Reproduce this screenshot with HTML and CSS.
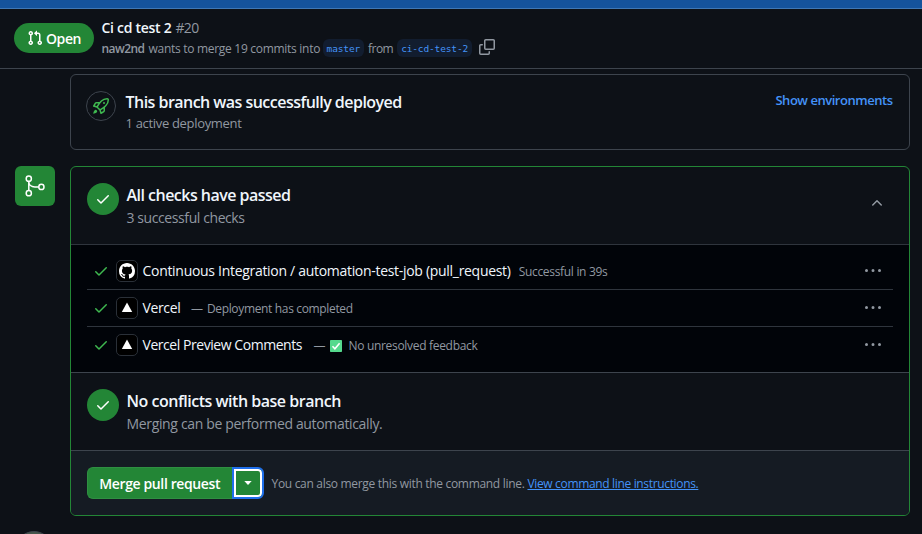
FILE: index.html
```
<!DOCTYPE html>
<html lang="en">
<head>
<meta charset="utf-8">
<title>Ci cd test 2 #20</title>
<link rel="stylesheet" href="styles.css">
</head>
<body>
<svg class="defs" aria-hidden="true">
  <symbol id="check" viewBox="0 0 16 16"><path d="M13.78 4.22a.75.75 0 0 1 0 1.06l-7.25 7.25a.75.75 0 0 1-1.06 0L2.22 9.28a.751.751 0 0 1 .018-1.042.751.751 0 0 1 1.042-.018L6 10.94l6.72-6.72a.75.75 0 0 1 1.06 0Z"/></symbol>
  <symbol id="kebab" viewBox="0 0 16 16"><path d="M8 9a1.5 1.5 0 1 0 0-3 1.5 1.5 0 0 0 0 3ZM1.5 9a1.5 1.5 0 1 0 0-3 1.5 1.5 0 0 0 0 3Zm13 0a1.5 1.5 0 1 0 0-3 1.5 1.5 0 0 0 0 3Z"/></symbol>
  <symbol id="triangle" viewBox="0 0 20 20"><path d="M10 4.6 15.2 14H4.8Z"/></symbol>
</svg>
<div class="topbar"></div>
<header class="header">
  <span class="state">
    <svg width="16" height="16" viewBox="0 0 16 16"><path d="M1.5 3.25a2.25 2.25 0 1 1 3 2.122v5.256a2.251 2.251 0 1 1-1.5 0V5.372A2.25 2.25 0 0 1 1.5 3.25Zm5.677-.177L9.573.677A.25.25 0 0 1 10 .854V2.5h1A2.5 2.5 0 0 1 13.5 5v5.628a2.251 2.251 0 1 1-1.5 0V5a1 1 0 0 0-1-1h-1v1.646a.25.25 0 0 1-.427.177L7.177 3.427a.25.25 0 0 1 0-.354ZM3.75 2.5a.75.75 0 1 0 0 1.5.75.75 0 0 0 0-1.5Zm0 9.5a.75.75 0 1 0 0 1.5.75.75 0 0 0 0-1.5Zm8.25.75a.75.75 0 1 0 1.5 0 .75.75 0 0 0-1.5 0Z"/></svg>
    <span class="state-text">Open</span>
  </span>
  <div class="head-text">
    <div class="head-title"><b>Ci cd test 2</b><span class="number">#20</span></div>
    <div class="head-meta">
      <b>naw2nd</b><span class="wants">wants to merge 19 commits into</span><code class="base">master</code><span class="from">from</span><code>ci-cd-test-2</code>
      <svg class="copy" width="16" height="16" viewBox="0 0 16 16"><path d="M0 6.75C0 5.784.784 5 1.75 5h1.5a.75.75 0 0 1 0 1.5h-1.5a.25.25 0 0 0-.25.25v7.5c0 .138.112.25.25.25h7.5a.25.25 0 0 0 .25-.25v-1.5a.75.75 0 0 1 1.5 0v1.5A1.75 1.75 0 0 1 9.25 16h-7.5A1.75 1.75 0 0 1 0 14.25Z"/><path d="M5 1.75C5 .784 5.784 0 6.75 0h7.5C15.216 0 16 .784 16 1.75v7.5A1.75 1.75 0 0 1 14.25 11h-7.5A1.75 1.75 0 0 1 5 9.25Zm1.75-.25a.25.25 0 0 0-.25.25v7.5c0 .138.112.25.25.25h7.5a.25.25 0 0 0 .25-.25v-7.5a.25.25 0 0 0-.25-.25Z"/></svg>
    </div>
  </div>
</header>
<main class="main">
  <section class="deploy">
    <span class="rocket"><svg width="16" height="16" viewBox="0 0 16 16"><path d="M14.064 0h.186C15.216 0 16 .784 16 1.75v.186a8.752 8.752 0 0 1-2.564 6.186l-.458.459c-.314.314-.641.616-.979.904v3.207c0 .608-.315 1.172-.833 1.49l-2.774 1.707a.749.749 0 0 1-1.11-.418l-.954-3.102a1.214 1.214 0 0 1-.145-.125L3.754 9.816a1.218 1.218 0 0 1-.124-.145L.528 8.717a.749.749 0 0 1-.418-1.11l1.71-2.774A1.748 1.748 0 0 1 3.31 4h3.204c.288-.338.59-.665.904-.979l.459-.458A8.749 8.749 0 0 1 14.064 0ZM8.938 3.623h-.002l-.458.458c-.76.76-1.437 1.598-2.02 2.5l-1.5 2.317 2.143 2.143 2.317-1.5c.902-.583 1.74-1.26 2.499-2.02l.459-.458a7.25 7.25 0 0 0 2.123-5.127V1.75a.25.25 0 0 0-.25-.25h-.186a7.249 7.249 0 0 0-5.125 2.123ZM3.56 14.56c-.732.732-2.334 1.045-3.005 1.148a.234.234 0 0 1-.201-.064.234.234 0 0 1-.064-.201c.103-.671.416-2.273 1.15-3.003a1.502 1.502 0 1 1 2.12 2.12Zm6.94-3.935c-.088.06-.177.118-.266.175l-2.35 1.521.548 1.783 1.949-1.2a.25.25 0 0 0 .119-.213ZM3.678 8.116 5.2 5.766c.058-.09.117-.178.176-.266H3.309a.25.25 0 0 0-.213.119l-1.2 1.95ZM12 5a1 1 0 1 1-2 0 1 1 0 0 1 2 0Z"/></svg></span>
    <div class="grow">
      <h3 class="deploy-title">This branch was successfully deployed</h3>
      <p class="deploy-sub">1 active deployment</p>
    </div>
    <a class="show-env">Show environments</a>
  </section>
  <div class="merge-row">
    <span class="merge-badge"><svg width="24" height="24" viewBox="0 0 24 24"><circle cx="5.8" cy="4.7" r="2.6"/><circle cx="5.8" cy="19.2" r="2.6"/><circle cx="18.4" cy="12.9" r="2.6"/><path d="M5.8 7.3v9.3M5.8 7.5c0 3.4 2.6 5.4 6 5.4h4"/></svg></span>
    <section class="merge-box">
      <div class="summary">
        <span class="status"><svg width="16" height="16"><use href="#check"/></svg></span>
        <div class="grow">
          <h3 class="checks-title">All checks have passed</h3>
          <p class="checks-sub">3 successful checks</p>
        </div>
        <svg class="chevron" width="16" height="16" viewBox="0 0 16 16"><path d="M3.22 10.53a.749.749 0 0 1 0-1.06l4.25-4.25a.749.749 0 0 1 1.06 0l4.25 4.25a.749.749 0 1 1-1.06 1.06L8 6.811 4.28 10.53a.749.749 0 0 1-1.06 0Z"/></svg>
      </div>
      <ul class="checks">
        <li>
          <svg class="ok" width="16" height="16"><use href="#check"/></svg>
          <span class="avatar"><svg width="16" height="16" viewBox="0 0 16 16"><path d="M8 0c4.42 0 8 3.58 8 8a8.013 8.013 0 0 1-5.45 7.59c-.4.08-.55-.17-.55-.38 0-.27.01-1.13.01-2.2 0-.75-.25-1.23-.54-1.48 1.78-.2 3.65-.88 3.65-3.95 0-.88-.31-1.59-.82-2.15.08-.2.36-1.02-.08-2.12 0 0-.67-.22-2.2.82-.64-.18-1.32-.27-2-.27-.68 0-1.36.09-2 .27-1.53-1.03-2.2-.82-2.2-.82-.44 1.1-.16 1.92-.08 2.12-.51.56-.82 1.28-.82 2.15 0 3.06 1.86 3.75 3.64 3.95-.23.2-.44.55-.51 1.07-.46.21-1.61.55-2.33-.66-.15-.24-.6-.83-1.23-.82-.67.01-.27.38.01.53.34.19.73.9.82 1.13.16.45.68 1.31 2.69.94 0 .67.01 1.3.01 1.49 0 .21-.15.45-.55.38A7.995 7.995 0 0 1 0 8c0-4.42 3.58-8 8-8Z"/></svg></span>
          <span class="name ci">Continuous Integration / automation-test-job (pull_request)</span>
          <span class="note">Successful in 39s</span>
          <svg class="more" width="16" height="16"><use href="#kebab"/></svg>
        </li>
        <li>
          <svg class="ok" width="16" height="16"><use href="#check"/></svg>
          <span class="avatar"><svg width="20" height="20"><use href="#triangle"/></svg></span>
          <span class="name vercel">Vercel</span>
          <span class="dash">—</span><span class="note dep">Deployment has completed</span>
          <svg class="more" width="16" height="16"><use href="#kebab"/></svg>
        </li>
        <li>
          <svg class="ok" width="16" height="16"><use href="#check"/></svg>
          <span class="avatar"><svg width="20" height="20"><use href="#triangle"/></svg></span>
          <span class="name preview">Vercel Preview Comments</span>
          <span class="dash">—</span><svg class="emoji" width="12" height="12" viewBox="0 0 12 12"><rect width="12" height="12" rx=".7"/><path d="m2.5 6.2 2.4 2.5 4.7-5.5"/></svg><span class="note">No unresolved feedback</span>
          <svg class="more" width="16" height="16"><use href="#kebab"/></svg>
        </li>
      </ul>
      <div class="conflicts">
        <span class="status"><svg width="16" height="16"><use href="#check"/></svg></span>
        <div class="grow">
          <h3 class="conflicts-title">No conflicts with base branch</h3>
          <p class="conflicts-sub">Merging can be performed automatically.</p>
        </div>
      </div>
      <div class="actions">
        <button class="merge-btn">Merge pull request</button>
        <button class="drop-btn" aria-label="Select merge method"><svg width="8" height="4" viewBox="0 0 8 4"><path d="M.3 0h7.4L4 4Z"/></svg></button>
        <span class="hint">You can also merge this with the command line.</span>
        <a class="cli">View command line instructions.</a>
      </div>
    </section>
  </div>
  <div class="next"><svg width="38" height="3" viewBox="0 0 38 3"><circle cx="19" cy="19" r="18.5"/></svg></div>
</main>
</body>
</html>
```
FILE: styles.css
```
* { box-sizing: border-box; }
body {
  margin: 0;
  height: 534px;
  overflow: hidden;
  background: #0d1117;
  color: #f0f6fc;
  font-family: "Open Sans", "Noto Sans", sans-serif;
  font-size: 14px;
  white-space: nowrap;
}
h3, p, ul { margin: 0; padding: 0; }
h3 { font-size: 16px; font-weight: 620; line-height: 24px; }
p { color: #9198a1; line-height: 20px; }
svg { display: block; flex: none; fill: currentColor; }
b { font-weight: 620; }
button { font-family: inherit; border: 0; padding: 0; color: #fff; }
.defs { position: absolute; width: 0; height: 0; }
.grow { flex: 1; }

.topbar { height: 9px; background: #15539c; border-bottom: 1px solid #3f77b5; }

.header {
  display: flex;
  align-items: flex-start;
  height: 60px;
  padding: 8px 14px 0;
  border-bottom: 1px solid #3d444d;
}
.state {
  display: flex;
  align-items: center;
  width: 80px;
  height: 30px;
  margin-top: 6px;
  padding-left: 13px;
  border-radius: 15px;
  background: #238636;
  color: #fff;
}
.state-text { margin-left: 3px; font-weight: 640; letter-spacing: -0.4px; }
.head-text { margin-left: 7.5px; }
.head-title { display: flex; line-height: 22px; letter-spacing: -0.28px; }
.number { margin-left: 4px; color: #9198a1; letter-spacing: -0.68px; }
.head-meta { display: flex; align-items: center; height: 18px; font-size: 12px; color: #9198a1; }
.head-meta b { letter-spacing: -0.55px; }
.wants { margin-left: 4px; letter-spacing: -0.29px; }
.from { margin: 0 4px 0 4px; letter-spacing: -0.55px; }
code {
  height: 18px;
  padding: 1px 4px 0;
  border-radius: 6px;
  background: #121d2f;
  color: #4493f8;
  font: 9.5px/18px "DejaVu Sans Mono", monospace;
  letter-spacing: -0.14px;
}
.base { margin-left: 2.5px; }
.copy { margin-left: 7px; margin-top: -3px; }

.main { padding: 5px 12px 0 15px; }
.deploy {
  display: flex;
  height: 76px;
  margin-left: 55px;
  padding: 15px 16.5px 0 15px;
  border: 1px solid #3d444d;
  border-radius: 6px;
}
.rocket {
  display: grid;
  place-items: center;
  width: 30px;
  height: 30px;
  margin: 1px 9.5px 0 0;
  border: 1px solid #3d444d;
  border-radius: 50%;
  color: #3fb950;
}
.deploy-title { letter-spacing: -0.53px; }
.deploy-sub { margin-top: -1px; font-size: 13px; letter-spacing: -0.32px; }
.show-env { color: #4493f8; font-size: 13px; font-weight: 600; line-height: 20px; letter-spacing: -0.47px; }

.merge-row { display: flex; align-items: flex-start; gap: 15px; margin-top: 16px; }
.merge-badge {
  display: grid;
  place-items: center;
  width: 40px;
  height: 40px;
  border-radius: 6px;
  background: #238636;
}
.merge-badge svg { fill: none; stroke: #fff; stroke-width: 1.5; }
.merge-box { flex: 1; height: 350px; border: 1px solid #238636; border-radius: 6px; overflow: hidden; }
.summary, .conflicts { display: flex; height: 78px; padding: 16px 24px 0 16px; border-bottom: 1px solid #2f353d; }
.conflicts { border-color: #3d444d; }
.status {
  display: grid;
  place-items: center;
  width: 32px;
  height: 32px;
  margin-right: 7.5px;
  border-radius: 50%;
  background: #238636;
  color: #fff;
}
.checks-title { letter-spacing: -0.52px; }
.checks-sub { letter-spacing: -0.41px; }
.conflicts-title { letter-spacing: -0.48px; }
.conflicts-sub { letter-spacing: -0.34px; }
.summary h3, .conflicts h3 { margin-top: 1px; line-height: 22px; }
.summary p, .conflicts p { margin-top: 2px; }
.chevron { margin-top: 12px; color: #9198a1; }

.checks { height: 128px; padding: 8px 16px 0; background: #010409; border-bottom: 1px solid #3d444d; list-style: none; }
.checks li { display: flex; align-items: center; height: 37px; padding: 0 12px 0 6px; border-bottom: 1px solid #2f353d; }
.checks li:last-child { border-color: transparent; }
.ok { color: #3fb950; }
.avatar {
  display: grid;
  place-items: center;
  width: 22px;
  height: 22px;
  margin: 0 4.5px 0 7px;
  border: 1px solid #2a3038;
  border-radius: 5px;
  background: #000;
  color: #fff;
}
.name { font-weight: 520; margin-top: -1px; }
.ci { letter-spacing: -0.3px; margin-right: 8px; }
.vercel { letter-spacing: -0.36px; margin-right: 10.5px; }
.preview { letter-spacing: -0.45px; margin-right: 11.5px; }
.note { color: #9198a1; font-size: 12px; letter-spacing: -0.31px; padding-top: 1px; }
.dep { letter-spacing: -0.34px; }
.dash { color: #9198a1; font-size: 12px; margin-right: 4px; }
.emoji { margin: 1px 6px 0 1px; fill: #55d98d; }
.emoji path { fill: none; stroke: #fff; stroke-width: 1.6; }
.more { margin-left: auto; color: #9198a1; }

.actions { display: flex; align-items: center; height: 64px; padding-left: 16px; background: #151b23; }
.merge-btn {
  width: 146px;
  height: 32px;
  padding-right: 1.5px;
  border: 1px solid #2f8f42;
  border-right: 0;
  border-radius: 6px 0 0 6px;
  background: #238636;
  font-size: 14px;
  font-weight: 620;
  letter-spacing: -0.38px;
}
.drop-btn {
  display: grid;
  place-items: center;
  width: 32px;
  height: 32px;
  margin-left: -1px;
  border: 2px solid #1f6feb;
  border-radius: 0 6px 6px 0;
  background: #238636;
  box-shadow: inset 0 0 0 2px #fff;
}
.hint { margin-left: 7.5px; color: #9198a1; font-size: 12px; letter-spacing: -0.31px; }
.cli { margin-left: 3px; color: #4493f8; font-size: 12px; letter-spacing: -0.34px; text-decoration: underline; }
.next { margin-top: 15px; }
.next circle { fill: #46574c; stroke: #3d444d; }
```
